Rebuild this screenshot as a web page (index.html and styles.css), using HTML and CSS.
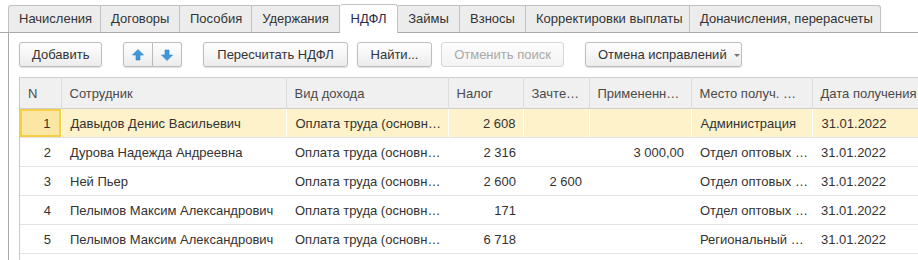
FILE: index.html
```html
<!DOCTYPE html>
<html lang="ru">
<head>
    <meta charset="UTF-8">
    <title>НДФЛ</title>
    <link rel="stylesheet" href="styles.css">
</head>
<body>
    <!-- Tabs -->
    <div class="tabs">
        <div class="tab">Начисления</div>
        <div class="tab">Договоры</div>
        <div class="tab">Пособия</div>
        <div class="tab">Удержания</div>
        <div class="tab active">НДФЛ</div>
        <div class="tab">Займы</div>
        <div class="tab">Взносы</div>
        <div class="tab">Корректировки выплаты</div>
        <div class="tab">Доначисления, перерасчеты</div>
    </div>

    <div class="panel">
        <!-- Command bar -->
        <div class="toolbar">
            <div class="group">
                <button class="btn btn-add">Добавить</button>
            </div>
            <div class="group">
                <div class="btn-pair">
                    <button class="btn btn-icon" title="Переместить вверх">
                        <svg width="12" height="12" viewBox="0 0 12 12"><polygon points="6,0.5 11.5,6 8,6 8,11 4,11 4,6 0.5,6" fill="#3f97dd" stroke="#2e7fc4" stroke-width="0.6"/></svg>
                    </button>
                    <button class="btn btn-icon" title="Переместить вниз">
                        <svg width="12" height="12" viewBox="0 0 12 12"><polygon points="6,11.5 11.5,6 8,6 8,1 4,1 4,6 0.5,6" fill="#3f97dd" stroke="#2e7fc4" stroke-width="0.6"/></svg>
                    </button>
                </div>
            </div>
            <div class="group">
                <button class="btn btn-recalc">Пересчитать НДФЛ</button>
                <button class="btn btn-find">Найти...</button>
                <button class="btn btn-cancel" disabled>Отменить поиск</button>
            </div>
            <div class="group">
                <button class="btn btn-menu">Отмена исправлений <span class="caret"></span></button>
            </div>
        </div>

        <!-- Table -->
        <div class="grid-wrap">
            <table class="grid">
                <colgroup>
                    <col style="width:41px">
                    <col style="width:225px">
                    <col style="width:162px">
                    <col style="width:75px">
                    <col style="width:66px">
                    <col style="width:102px">
                    <col style="width:121px">
                    <col style="width:130px">
                </colgroup>
                <thead>
                    <tr>
                        <th>N</th>
                        <th>Сотрудник</th>
                        <th>Вид дохода</th>
                        <th>Налог</th>
                        <th>Зачтенный аванс</th>
                        <th>Примененный вычет</th>
                        <th>Место получ. …</th>
                        <th>Дата получения</th>
                    </tr>
                </thead>
                <tbody>
                    <tr class="selected">
                        <td class="num focus">1</td>
                        <td>Давыдов Денис Васильевич</td>
                        <td>Оплата труда (основная база)</td>
                        <td class="num">2 608</td>
                        <td class="num"></td>
                        <td class="num"></td>
                        <td>Администрация</td>
                        <td>31.01.2022</td>
                    </tr>
                    <tr>
                        <td class="num">2</td>
                        <td>Дурова Надежда Андреевна</td>
                        <td>Оплата труда (основная база)</td>
                        <td class="num">2 316</td>
                        <td class="num"></td>
                        <td class="num">3 000,00</td>
                        <td>Отдел оптовых продаж</td>
                        <td>31.01.2022</td>
                    </tr>
                    <tr>
                        <td class="num">3</td>
                        <td>Ней Пьер</td>
                        <td>Оплата труда (основная база)</td>
                        <td class="num">2 600</td>
                        <td class="num">2 600</td>
                        <td class="num"></td>
                        <td>Отдел оптовых продаж</td>
                        <td>31.01.2022</td>
                    </tr>
                    <tr>
                        <td class="num">4</td>
                        <td>Пелымов Максим Александрович</td>
                        <td>Оплата труда (основная база)</td>
                        <td class="num">171</td>
                        <td class="num"></td>
                        <td class="num"></td>
                        <td>Отдел оптовых продаж</td>
                        <td>31.01.2022</td>
                    </tr>
                    <tr>
                        <td class="num">5</td>
                        <td>Пелымов Максим Александрович</td>
                        <td>Оплата труда (основная база)</td>
                        <td class="num">6 718</td>
                        <td class="num"></td>
                        <td class="num"></td>
                        <td>Региональный … отдел</td>
                        <td>31.01.2022</td>
                    </tr>
                </tbody>
            </table>
        </div>
    </div>
</body>
</html>
```

FILE: styles.css
```css
body {
    margin: 0;
    background-color: #fff;
    font-family: "Liberation Sans", Arial, sans-serif;
    font-size: 13px;
    color: #333;
    overflow: hidden;
}

/* Tabs */
.tabs {
    display: flex;
    padding: 5px 0 0 8px;
    border-bottom: 1px solid #a9a9a9;
    height: 27px;
}

.tab {
    box-sizing: border-box;
    height: 27px;
    line-height: 26px;
    padding: 0 10px;
    background-color: #ececec;
    border: 1px solid #c2c2c2;
    border-bottom: none;
    border-left: none;
    color: #333;
    white-space: nowrap;
    text-align: center;
}

/* tab widths as in the form */
.tab:nth-child(1) { width: 93px; }
.tab:nth-child(2) { width: 79px; }
.tab:nth-child(3) { width: 72px; }
.tab:nth-child(4) { width: 88px; }
.tab:nth-child(5) { width: 58px; }
.tab:nth-child(6) { width: 62px; }
.tab:nth-child(7) { width: 66px; }
.tab:nth-child(8) { width: 164px; }
.tab:nth-child(9) { width: 191px; }

.tab:first-child {
    border-left: 1px solid #c2c2c2;
    border-top-left-radius: 3px;
}

.tab:last-child {
    border-top-right-radius: 3px;
}

.tab.active {
    background-color: #fff;
    height: 29px;
    margin-top: -1px;
    margin-bottom: -1px;
    line-height: 27px;
    border-radius: 3px 3px 0 0;
    color: #2b2b48;
}

/* Panel */
.panel {
    border-left: 1px solid #a9a9a9;
    margin-left: 8px;
    padding: 9px 0 0 10px;
    height: 218px;
}

.toolbar {
    display: flex;
    gap: 21px;
    height: 25px;
}

.group {
    display: flex;
    gap: 9px;
}

.btn {
    height: 25px;
    padding: 0 12px;
    font-family: inherit;
    font-size: 13px;
    color: #333;
    background: linear-gradient(#ffffff, #ececec);
    border: 1px solid #bdbdbd;
    border-radius: 3px;
    box-shadow: 0 1px 1px rgba(0, 0, 0, 0.12);
    white-space: nowrap;
}

.btn-add { width: 83px; }
.btn-recalc { width: 145px; }
.btn-find { width: 75px; }
.btn-cancel { width: 123px; }
.btn-menu { width: 157px; }

.btn[disabled] {
    color: #a8a8a8;
    background: linear-gradient(#fdfdfd, #f3f3f3);
    border-color: #d6d6d6;
    box-shadow: none;
}

.btn-pair {
    display: flex;
}

.btn-icon {
    width: 30px;
    padding: 0;
    display: flex;
    align-items: center;
    justify-content: center;
}

.btn-pair .btn-icon:first-child {
    border-radius: 3px 0 0 3px;
}

.btn-pair .btn-icon:last-child {
    width: 29px;
    border-left: none;
    border-radius: 0 3px 3px 0;
}

.caret {
    display: inline-block;
    width: 0;
    height: 0;
    margin-left: 4px;
    border-left: 3px solid transparent;
    border-right: 3px solid transparent;
    border-top: 3px solid #777;
    vertical-align: middle;
}

/* Grid */
.grid-wrap {
    margin-top: 10px;
    border-left: 1px solid #c8c8c8;
    overflow: hidden;
    height: 183px;
}

.grid {
    border-collapse: collapse;
    table-layout: fixed;
    width: 922px;
}

.grid th {
    height: 30px;
    padding: 0 4px 0 8px;
    background-color: #f0f0f0;
    border-top: 1px solid #cfcfcf;
    border-bottom: 1px solid #cfcfcf;
    border-right: 1px solid #dcdcdc;
    font-weight: normal;
    text-align: left;
    color: #4a4a4a;
    white-space: nowrap;
    overflow: hidden;
    text-overflow: ellipsis;
}

.grid td {
    height: 28px;
    padding: 0 3px 0 9px;
    border-bottom: 1px solid #e3e3e3;
    white-space: nowrap;
    overflow: hidden;
    text-overflow: ellipsis;
}

.grid td.num {
    text-align: right;
    padding-right: 7px;
}

.grid td:first-child {
    padding-right: 10px;
}

.grid tr.selected td {
    background-color: #fdf2c9;
    border-right: 1px solid #fff;
}

.grid tr.selected td.focus {
    background-color: #fbe7a3;
    box-shadow: inset 0 0 0 2px #f6cf45;
}
```
